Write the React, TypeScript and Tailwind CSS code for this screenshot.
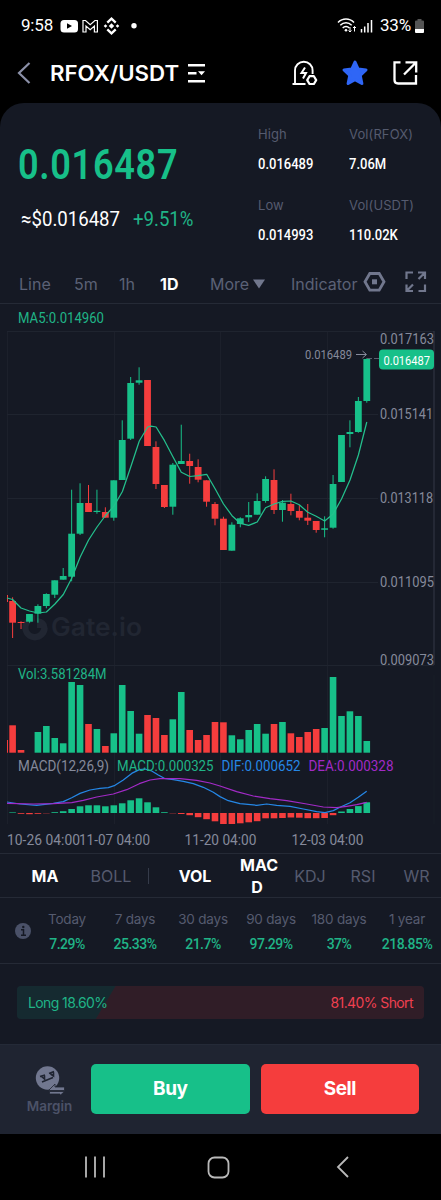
import React from "react";

type Candle = [number, number, number, number, 0 | 1];

const GREEN = "#17c089";
const RED = "#f53d3d";
const STEP = 8.433;
const cx = (i: number) => 12.6 + i * STEP;

// wick top, body top, body bottom, wick bottom, rising
const candles: Candle[] = [
  [597.3, 601, 622.7, 638, 0],
  [621.3, 622, 623, 629, 0],
  [614, 614, 621.7, 622.7, 1],
  [604.3, 606, 613.7, 622.7, 1],
  [593.3, 594, 606, 608.3, 1],
  [580.3, 580.3, 594.7, 598, 1],
  [568, 576, 579.7, 579.7, 1],
  [489.7, 533.7, 576.7, 581.3, 1],
  [483.3, 503, 533.7, 535, 1],
  [485, 503, 512, 512, 0],
  [489.7, 510.8, 512, 513.7, 1],
  [507.3, 512, 517.7, 517.7, 0],
  [480.3, 480.3, 517.7, 520.7, 1],
  [420.3, 440, 480, 480, 1],
  [377, 383, 438.7, 440, 1],
  [367.3, 380.3, 382.7, 384.7, 1],
  [380, 380, 446, 446, 0],
  [441.3, 447, 484, 489, 0],
  [485, 485, 507, 508, 0],
  [463, 464.7, 506.7, 514.7, 1],
  [424.7, 461, 464, 464, 1],
  [453.7, 461, 466, 483.7, 0],
  [459.3, 467, 479.7, 482.3, 0],
  [480.3, 480.3, 501.7, 506.7, 0],
  [502, 504, 518.7, 525.3, 0],
  [516.7, 518.7, 550, 550, 0],
  [522.3, 524.7, 550.7, 550.7, 1],
  [517.3, 518.3, 524, 527.3, 1],
  [502, 515, 517.3, 522, 1],
  [493.3, 501, 514.7, 514.7, 1],
  [476.3, 479, 501, 502.7, 1],
  [469.3, 480, 510, 514, 0],
  [500, 502.7, 510, 521.7, 1],
  [493.7, 504, 511, 515.3, 0],
  [505, 511, 517.7, 520.3, 0],
  [504, 517.7, 520.7, 525, 0],
  [521, 521, 530, 532.7, 0],
  [516.3, 528.3, 529.8, 537.3, 1],
  [475, 484, 527.7, 528.7, 1],
  [435, 435, 482, 482, 1],
  [420.3, 432, 434, 447.3, 1],
  [397, 401, 432, 432.7, 1],
  [358.3, 359, 401, 402.7, 1],
];

const volumes = [
  725.3, 750, 752.7, 732, 726, 738, 743.3, 682, 685, 724, 729, 746, 733.3, 685, 711, 733.7, 715, 718, 735, 719.3, 692,
  730, 740, 735, 722, 722.3, 735.3, 739.3, 730, 724, 733.7, 724, 722, 733.3, 737, 732, 729, 728, 677, 716, 711.3, 716,
  741,
];

// signed histogram heights, positive is up
const histogram = [
  0.6, -0.8, -1.2, -0.8, -0.3, 0.8, 1.8, 4, 6.7, 7.7, 7.7, 6.7, 7.7, 9.7, 12.7, 14.7, 10.7, 5.7, 0.8, -0.3, -1, -2.2,
  -4.2, -6.2, -8.3, -11, -11, -10.3, -9.3, -8.2, -5.3, -5.3, -5, -4.5, -4.7, -5.2, -5.2, -5, -2.2, 1.5, 4, 6.9, 10.7,
];

const maLine =
  "7,598 12.6,599.5 21,608 29.5,611 38,613 46.4,612 54.9,604 63.3,594.5 71.8,578 80.2,557 88.6,540 97,527 105.5,515.5 114,506 122.4,491.5 130.8,466.7 139.3,441 147.7,427 151,426.2 156.1,427 164.5,440.7 172.9,456.7 181.3,472.3 189.8,476.5 198.2,475.7 206.7,474.3 215.1,488.7 223.5,504 232,515.7 240.3,523.3 248.7,525.3 257.2,522 265.6,507.7 274.1,504 282.5,501.3 290.9,501 299.3,504.7 307.8,512.3 316.2,516.3 324.7,521 333.1,514 341.5,499 350,480 358.4,455 366.8,422";
const difLine =
  "7,802 20,804 36.7,805.3 53.3,803.4 63.3,801.6 71.7,797.7 80,793.4 90,790 100,788.3 108.3,787.6 115,785.3 123.3,780 131.7,773.4 139.3,769.6 145,769 151.7,771 158.3,775 164.3,778.3 173.3,779.7 183.3,781.3 193.3,783.7 203.3,787.3 213.3,792.3 220,796.6 228.3,800.7 240,803.7 256.7,805.3 266.7,804 276.7,805.3 290,806.3 303.3,809 316.7,811.7 325,812.6 333.3,810.6 340,807.3 350,802.7 358.3,797.3 366.7,791.3";
const deaLine =
  "7,803.4 33.3,804 53.3,803.7 71.7,802.6 83.3,800.3 96.7,797 113.3,794 126.7,789.7 139.3,783.7 150,780 160,778.7 180,778.7 196.7,780.3 210,783 220,786 236.7,791.7 253.3,796 270,798.7 286.7,800.7 306.7,804 323.3,807 336.7,807.7 346.7,806.3 356.7,804.7 366.7,802.3";

interface LabelProps {
  x: number;
  y: number;
  w: number;
  size?: number;
  fill?: string;
  children: string;
}

function Label({ x, y, w, size = 14, fill = "#858a9b", children }: LabelProps) {
  return (
    <text x={x} y={y} fontSize={size} fill={fill} textLength={w} lengthAdjust="spacingAndGlyphs">
      {children}
    </text>
  );
}

function Chart() {
  return (
    <svg viewBox="0 304 441 549" className="block h-[549px] w-full font-['Roboto',sans-serif]">
      <g stroke="#1f242f" strokeWidth="1">
        <path d="M7 331.5H434M7 414.5H378M7 498.5H378M7 582.5H378M7 665.5H434" />
        <path d="M7.5 331V824M114.5 331V824M220.5 331V824M327.5 331V824" strokeOpacity=".7" />
        <path d="M434 331V665" stroke="#343947" />
        <path d="M434 675V824" strokeOpacity=".4" />
      </g>
      <g fill="#212632">
        <path d="M35 615a12.700 12.700 0 1 0 12.700 13h-6.500a6.400 6.400 0 1 1-6.200-6.800z" />
        <path d="M37 618v10h10.500q-.5-9-10.500-10z" />
        <text
          x="51"
          y="635.500"
          fontSize="25"
          fontWeight="600"
          fontFamily="Inter"
          textLength="91"
          lengthAdjust="spacingAndGlyphs"
        >
          Gate.io
        </text>
      </g>
      <path d="M7.500 595V602" stroke={RED} />
      <path d="M7 740h1v12.700h-1z" fill={RED} />
      {candles.map(([hi, top, bottom, lo, up], i) => {
        const color = up ? GREEN : RED;
        const h = histogram[i];
        return (
          <g key={i} fill={color}>
            <rect x={cx(i) - 0.5} y={hi} width={1} height={lo - hi} />
            <rect x={cx(i) - 3.4} y={top} width={6.8} height={bottom - top} />
            <rect x={cx(i) - 3.3} y={volumes[i]} width={6.6} height={752.7 - volumes[i]} />
            <rect
              x={cx(i) - 3.3}
              y={h > 0 ? 813 - h : 813}
              width={6.6}
              height={Math.abs(h)}
              fill={h > 0 ? GREEN : RED}
            />
          </g>
        );
      })}
      <g fill="none" strokeLinejoin="round" strokeWidth="1.25">
        <polyline points={maLine} stroke="#24c08d" />
        <polyline points={difLine} stroke="#2587e6" />
        <polyline points={deaLine} stroke="#a22ac6" />
      </g>
      <Label x={18} y={323} w={86} fill="#20b487">MA5:0.014960</Label>
      <Label x={305} y={359} w={47} size={12.5}>0.016489</Label>
      <path d="M356 354.500H366M362.500 351l4 3.500-4 3.500" fill="none" stroke="#858a9b" />
      <path d="M367 358.500H372M374 358.500H379" stroke="#596070" />
      <Label x={380} y={343.500} w={54}>0.017163</Label>
      <rect x="379" y="349.500" width="55" height="20" rx="4" fill={GREEN} />
      <Label x={383.500} y={365} w={46.500} size={13} fill="#ffffff">0.016487</Label>
      <Label x={380} y={419} w={53}>0.015141</Label>
      <Label x={380} y={503} w={53}>0.013118</Label>
      <Label x={380} y={587} w={54}>0.011095</Label>
      <Label x={380} y={664.500} w={54}>0.009073</Label>
      <Label x={18} y={679} w={88.500} fill="#20b487">Vol:3.581284M</Label>
      <Label x={18} y={771} w={91}>MACD(12,26,9)</Label>
      <Label x={117} y={771} w={96.500} fill="#20b487">MACD:0.000325</Label>
      <Label x={221.500} y={771} w={79} fill="#2587e6">DIF:0.000652</Label>
      <Label x={308.500} y={771} w={85} fill="#a22ac6">DEA:0.000328</Label>
      <Label x={7} y={845} w={73}>10-26 04:00</Label>
      <Label x={79} y={845} w={71}>11-07 04:00</Label>
      <Label x={184.500} y={845} w={72}>11-20 04:00</Label>
      <Label x={291.500} y={845} w={72}>12-03 04:00</Label>
    </svg>
  );
}

function StatusBar() {
  return (
    <div className="flex h-[52px] items-center pl-[21px] pr-4 font-['Roboto',sans-serif] text-white">
      <span className="w-[39px] text-[17px] tracking-[-0.2px]">9:58</span>
      <svg width="78" height="18" viewBox="60 17 78 18">
        <rect x="60.500" y="20" width="17.500" height="12.500" rx="3.500" fill="#fff" />
        <path d="M67 23.300v5.400l5-2.700z" fill="#000" />
        <path
          d="M83 32V20.500h2.500l4.700 4.300 4.700-4.300h2.500V32h-3v-6l-4.200 3.800-4.200-3.800v6z"
          fill="none"
          stroke="#fff"
          strokeWidth="1.200"
        />
        <g fill="none" stroke="#fff" strokeWidth="2.300">
          <path d="M107.300 22.600l4.200-4 4.200 4M107.300 29.400l4.200 4 4.200-4" />
        </g>
        <path
          d="M111.500 23.300l2.700 2.700-2.700 2.700-2.700-2.700zM105.500 24.200l1.800 1.800-1.800 1.800-1.800-1.800zM117.500 24.200l1.800 1.800-1.800 1.800-1.800-1.800z"
          fill="#fff"
        />
        <circle cx="134" cy="25.800" r="2.700" fill="#fff" />
      </svg>
      <svg className="ml-auto" width="38" height="18" viewBox="337 17 38 18">
        <g fill="none" stroke="#fff" strokeWidth="1.500">
          <path d="M338 22.500c4.500-4.700 11.500-4.700 16 0M340.300 25.300c3.300-3.300 8.100-3.300 11.400 0M342.700 28c1.900-2 4.700-2 6.600 0" />
          <path d="M350 27v5M348.500 30.500l1.500 1.500 1.500-1.500M354.500 31.500v-5M353 28l1.500-1.500 1.500 1.500" strokeWidth="1" />
        </g>
        <circle cx="346" cy="30.300" r="1.300" fill="#fff" />
        <path d="M361.500 29v3.500M364.700 26.500v6M368 23v9.500M371.500 20v12.500" stroke="#fff" strokeWidth="1.500" />
      </svg>
      <span className="ml-[5px] w-[34px] whitespace-nowrap text-[17px] tracking-[-0.2px]">33%</span>
      <svg width="11" height="16" viewBox="0 0 11 16">
        <path d="M3.500 1h4v1.500H9Q10 2.500 10 3.500V11H1V3.500Q1 2.500 2 2.500h1.500z" fill="#555" />
        <path d="M1 11h9v3q0 1-1 1H2q-1 0-1-1z" fill="#fff" />
      </svg>
    </div>
  );
}

function Header() {
  return (
    <div className="mb-[9px] flex h-[42px] items-center pl-[17px]">
      <svg width="14" height="22" viewBox="0 0 14 22" fill="none" stroke="#8b90a8" strokeWidth="2.200">
        <path d="M12.500 1L2 11l10.500 10" />
      </svg>
      <h1 className="ml-[19px] w-[137px] origin-left scale-x-[1.06] whitespace-nowrap pt-[2px] text-[21px] font-semibold leading-6 text-white">
        RFOX/USDT
      </h1>
      <svg width="19" height="19" viewBox="0 0 19 19">
        <path d="M1 1.200h17M1 9.200h8.500M1 17.200h17" stroke="#fff" strokeWidth="2.600" />
        <path d="M11 7.200h7l-3.500 4z" fill="#fff" />
      </svg>
      <svg className="ml-[85px]" width="28" height="28" viewBox="291 58 28 28" fill="none" stroke="#fff">
        <path d="M305.500 83H292.500M295 82.500V69.500a8.800 8.800 0 0 1 17.600 0V73" strokeWidth="1.900" />
        <path d="M305 66.500L301.500 72h4.500l-3 5.500" strokeWidth="2" />
        <path d="M309.500 75.200h4.400l2.300 3.900-2.300 3.900h-4.400l-2.300-3.900z" strokeWidth="2.200" strokeLinejoin="round" />
      </svg>
      <svg className="ml-[22px]" width="28" height="28" viewBox="0 0 28 28">
        <path
          d="M14 3l3.200 7 7.800.9-5.800 5.400 1.700 8.200L14 20.600l-6.900 3.900 1.700-8.200L3 10.900l7.800-.9z"
          fill="#2f66f6"
          stroke="#2f66f6"
          strokeWidth="3"
          strokeLinejoin="round"
        />
      </svg>
      <svg className="ml-[22px]" width="28" height="28" viewBox="391 58 28 28" fill="none" stroke="#fff" strokeWidth="2.300">
        <path d="M400.500 61.300H394.500V79q0 3.500 3.500 3.500h18V74M405.500 61.300H416.200V71.500M416 61.500L404 73.500" />
      </svg>
    </div>
  );
}

function Metric({ label, value }: { label: string; value: string }) {
  return (
    <div className="h-[71px]">
      <div className="text-[13px] leading-[18px] tracking-[0.1px] text-[#555b6f]">{label}</div>
      <div className="mt-3 origin-left scale-x-[0.93] whitespace-nowrap font-['Roboto',sans-serif] text-[14px] font-medium leading-[18px] text-white">
        {value}
      </div>
    </div>
  );
}

function Summary() {
  return (
    <div className="flex h-[163px]">
      <div className="w-[258px] pl-[18px] pt-[38px] font-['Roboto',sans-serif]">
        <div className="origin-left scale-x-[0.86] whitespace-nowrap text-[42px] font-semibold leading-[48px] tracking-[0.8px] text-[#17c089]">
          0.016487
        </div>
        <div className="mt-[19px] flex pl-[3px] text-[20px] leading-[22px]">
          <span className="w-[112px] origin-left scale-x-[0.93] whitespace-nowrap text-white">≈$0.016487</span>
          <span className="origin-left scale-x-[0.93] whitespace-nowrap text-[#20b487]">+9.51%</span>
        </div>
      </div>
      <div className="grid grid-cols-[91px_92px] content-start pt-[22px]">
        <Metric label="High" value="0.016489" />
        <Metric label="Vol(RFOX)" value="7.06M" />
        <Metric label="Low" value="0.014993" />
        <Metric label="Vol(USDT)" value="110.02K" />
      </div>
    </div>
  );
}

function Intervals() {
  return (
    <div className="grid h-[38px] grid-cols-[55px_45px_41px_50px_81px_72px_42px_1fr] items-center border-b border-[#252a36] pb-px pl-[19px] text-[16px] text-[#5b6176]">
      <span>Line</span>
      <span>5m</span>
      <span>1h</span>
      <span className="font-bold text-white">1D</span>
      <span className="flex items-center gap-1">
        More
        <svg width="12" height="10" viewBox="0 0 12 10">
          <path d="M0 .5h12L6 9.500z" fill="#71778d" />
        </svg>
      </span>
      <span className="w-[67px] overflow-hidden whitespace-nowrap">Indicator</span>
      <svg className="-mt-1" width="24" height="22" viewBox="0 0 24 22" fill="none" stroke="#71778d">
        <path d="M6.800 2.500h9.400l4.800 8.300-4.800 8.300H6.800L2 10.800z" strokeWidth="2.800" />
        <path d="M9 8.300h5v5H9z" fill="#71778d" stroke="none" />
      </svg>
      <svg className="-mt-1" width="22" height="22" viewBox="0 0 22 22" fill="none" stroke="#71778d" strokeWidth="2.200">
        <path d="M1.500 8V1.500H8M13 1.500h7V8M20 1.500l-6.500 6.500M1.500 13.500V20H8M1.500 20L8 13.500M13.500 20H20v-6.500" />
      </svg>
    </div>
  );
}

function Indicators() {
  return (
    <div className="grid h-[45px] grid-cols-[78px_70px_2px_90px_34px_72px_34px_61px] items-center border-y border-[#252a36] text-center text-[16px] leading-[22px] text-[#555b6f]">
      <span className="pl-3 font-bold text-white">MA</span>
      <span className="pr-1">BOLL</span>
      <span className="h-4 w-px bg-[#353b4a]" />
      <span className="font-bold text-white">VOL</span>
      <span className="font-bold text-white">
        MAC
        <br />D
      </span>
      <span>KDJ</span>
      <span>RSI</span>
      <span className="pl-3">WR</span>
    </div>
  );
}

const returns: [string, string][] = [
  ["Today", "7.29%"],
  ["7 days", "25.33%"],
  ["30 days", "21.7%"],
  ["90 days", "97.29%"],
  ["180 days", "37%"],
  ["1 year", "218.85%"],
];

function Returns() {
  return (
    <div className="flex h-[66px] border-b border-[#252a36]">
      <div className="flex w-[33px] items-center justify-end pr-[2px]">
        <svg width="16" height="16" viewBox="0 0 16 16">
          <circle cx="8" cy="8" r="8" fill="#4a5168" />
          <path d="M6 6.700h2.500v5M6 12.200h5" stroke="#151924" strokeWidth="1.500" fill="none" />
          <circle cx="8.300" cy="4" r="1.200" fill="#151924" />
        </svg>
      </div>
      <div className="grid flex-1 grid-cols-6 text-center">
        {returns.map(([label, value]) => (
          <div key={label} className="whitespace-nowrap pt-3">
            <div className="text-[13.500px] leading-[18px] tracking-[-0.2px] text-[#555b6f]">{label}</div>
            <div className="mt-[7px] font-['Roboto',sans-serif] text-[14px] font-medium leading-[18px] tracking-[-0.5px] text-[#20b487]">
              {value}
            </div>
          </div>
        ))}
      </div>
    </div>
  );
}

function Sentiment() {
  return (
    <div className="px-[17px] pb-[25px] pt-[22px]">
      <div className="flex h-[33px] items-center justify-between rounded-[4px] bg-[linear-gradient(121deg,#152a30_0_84px,#301d27_85px)] px-[11px] text-[14px] tracking-[-0.6px]">
        <span className="text-[#20b487]">Long 18.60%</span>
        <span className="text-[#ef4050]">81.40% Short</span>
      </div>
    </div>
  );
}

function Actions() {
  return (
    <div className="flex h-[90px] border-t border-[#242a37] bg-[#1f2431] pr-[22px] pt-[19px]">
      <div className="flex w-[91px] flex-col items-center pl-[8px] text-[#4c5268]">
        <svg width="30" height="30" viewBox="35 1064 30 30" className="mt-px">
          <circle cx="47.500" cy="1077" r="11.700" fill="#71778f" />
          <path
            d="M40 1075.500l5-1.500M49 1072.500l5-2M41.500 1075.500l3 2.500v-3.500M50.500 1073l3 2v-4M42 1081l11-4.500"
            fill="none"
            stroke="#1f2431"
            strokeWidth="1.600"
          />
          <path
            d="M48.500 1089.500l6.500-6.500v3h9.500v3.500zM49.500 1090.500h15l-4.500 4v-1.500H49.500z"
            fill="#71778f"
            stroke="#1f2431"
            strokeWidth=".8"
          />
        </svg>
        <span className="mt-[2px] text-[13.500px] font-semibold leading-[18px]">Margin</span>
      </div>
      <div className="grid flex-1 grid-cols-2 gap-[11px] text-[19px] font-bold text-white">
        <button className="h-[50px] rounded-[5px] bg-[#17c089] tracking-[-0.5px]">Buy</button>
        <button className="h-[50px] rounded-[5px] bg-[#f53d3d] tracking-[-0.5px]">Sell</button>
      </div>
    </div>
  );
}

function NavBar() {
  return (
    <div className="flex h-[66px] items-center bg-black pl-[84px]">
      <svg width="22" height="22" viewBox="0 0 22 22" stroke="#b9b9b9" strokeWidth="1.800">
        <path d="M2 .5v21M11 .5v21M20 .5v21" />
      </svg>
      <svg className="ml-[101px]" width="23" height="23" viewBox="0 0 23 23" fill="none" stroke="#b9b9b9" strokeWidth="1.800">
        <rect x="1.500" y="1.500" width="20" height="20" rx="6" />
      </svg>
      <svg className="ml-[105px]" width="15" height="22" viewBox="0 0 15 22" fill="none" stroke="#b9b9b9" strokeWidth="1.800">
        <path d="M13 1L3 11l10 10" />
      </svg>
    </div>
  );
}

export default function App() {
  return (
    <div className="h-[1200px] w-[441px] overflow-hidden bg-black font-['Inter',sans-serif]">
      <StatusBar />
      <Header />
      <main className="overflow-hidden rounded-t-[24px] bg-[#151924]">
        <Summary />
        <Intervals />
        <Chart />
        <Indicators />
        <Returns />
        <Sentiment />
      </main>
      <Actions />
      <NavBar />
    </div>
  );
}
